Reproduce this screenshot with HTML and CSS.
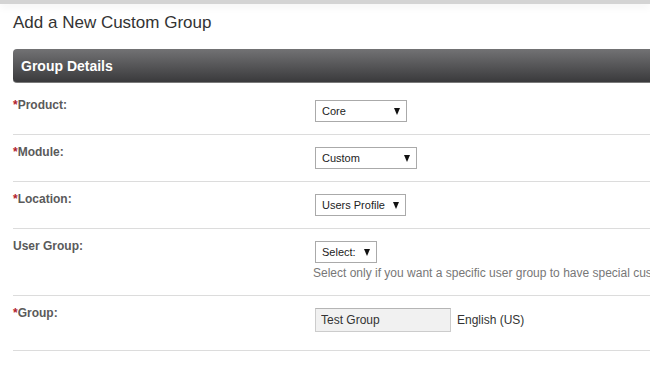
FILE: index.html
```html
<!DOCTYPE html>
<html lang="en">
<head>
    <meta charset="UTF-8">
    <meta name="viewport" content="width=device-width, initial-scale=1.0">
    <title>Add a New Custom Group</title>
    <link rel="stylesheet" href="styles.css">
</head>
<body>
    <div class="topbar"></div>
    <div class="page">
        <h1>Add a New Custom Group</h1>

        <div class="section-head">Group Details</div>

        <form class="details">
            <div class="row row-first">
                <label class="label"><span class="req">*</span>Product:</label>
                <div class="field">
                    <div class="select select-product"><span>Core</span><i class="arrow"></i></div>
                </div>
            </div>
            <div class="row">
                <label class="label"><span class="req">*</span>Module:</label>
                <div class="field">
                    <div class="select select-module"><span>Custom</span><i class="arrow"></i></div>
                </div>
            </div>
            <div class="row">
                <label class="label"><span class="req">*</span>Location:</label>
                <div class="field">
                    <div class="select select-location"><span>Users Profile</span><i class="arrow"></i></div>
                </div>
            </div>
            <div class="row">
                <label class="label">User Group:</label>
                <div class="field">
                    <div class="select select-usergroup"><span>Select:</span><i class="arrow"></i></div>
                    <div class="help">Select only if you want a specific user group to have special custom fields.</div>
                </div>
            </div>
            <div class="row row-last">
                <label class="label"><span class="req">*</span>Group:</label>
                <div class="field field-inline">
                    <input type="text" class="text-input" value="Test Group">
                    <span class="lang">English (US)</span>
                </div>
            </div>
        </form>
    </div>
</body>
</html>
```

FILE: styles.css
```css
html { overflow: hidden; }
body { margin: 0; font-family: "Liberation Sans", Arial, sans-serif; font-size: 12px; color: #333; background: #fff; }
.topbar { height: 4px; background: #d4d4d4; box-shadow: 0 2px 8px rgba(0,0,0,0.08); }
.page { padding-left: 13px; width: 760px; }
h1 { margin: 8px 0 15px; font-size: 17px; line-height: 22px; font-weight: normal; color: #333; }

.section-head { height: 31px; padding: 2px 0 0 8px; line-height: 31px; font-size: 14px; font-weight: bold; color: #fff; border-radius: 4px 0 0 4px; background: linear-gradient(#727274, #3a3a3c); border-bottom: 1px solid #7a7a7a; }

.details { margin: 0; }
.row { display: grid; grid-template-columns: 300px 1fr; padding: 10px 0 12px; border-bottom: 1px solid #dcdcdc; }
.row-first { padding-top: 15px; }
.row-last { padding-bottom: 18px; }
.label { font-weight: bold; line-height: 15px; color: #5a5a5a; }
.req { color: #b3202e; }

.field { padding-top: 2px; }
.field-inline { display: flex; align-items: center; }

.select { display: flex; align-items: center; box-sizing: border-box; height: 22px; margin-left: 2px; padding: 0 6px 0 6px; border: 1px solid #aaa; font-size: 11px; color: #222; background: #fff; }
.select .arrow { margin-left: auto; width: 0; height: 0; border-left: 3px solid transparent; border-right: 3px solid transparent; border-top: 7px solid #111; }
.select-product { width: 92px; }
.select-module { width: 102px; }
.select-location { width: 91px; }
.select-usergroup { width: 62px; }

.help { margin: 3px 0 2px; line-height: 15px; color: #777; white-space: nowrap; }

.text-input { box-sizing: border-box; width: 136px; height: 24px; margin: 0 0 0 2px; padding: 0 5px; border: 1px solid #ccc; border-top-color: #b5b5b5; background: #f1f1f1; font: 12px "Liberation Sans", Arial, sans-serif; color: #333; }
.lang { margin-left: 6px; color: #333; }
```
